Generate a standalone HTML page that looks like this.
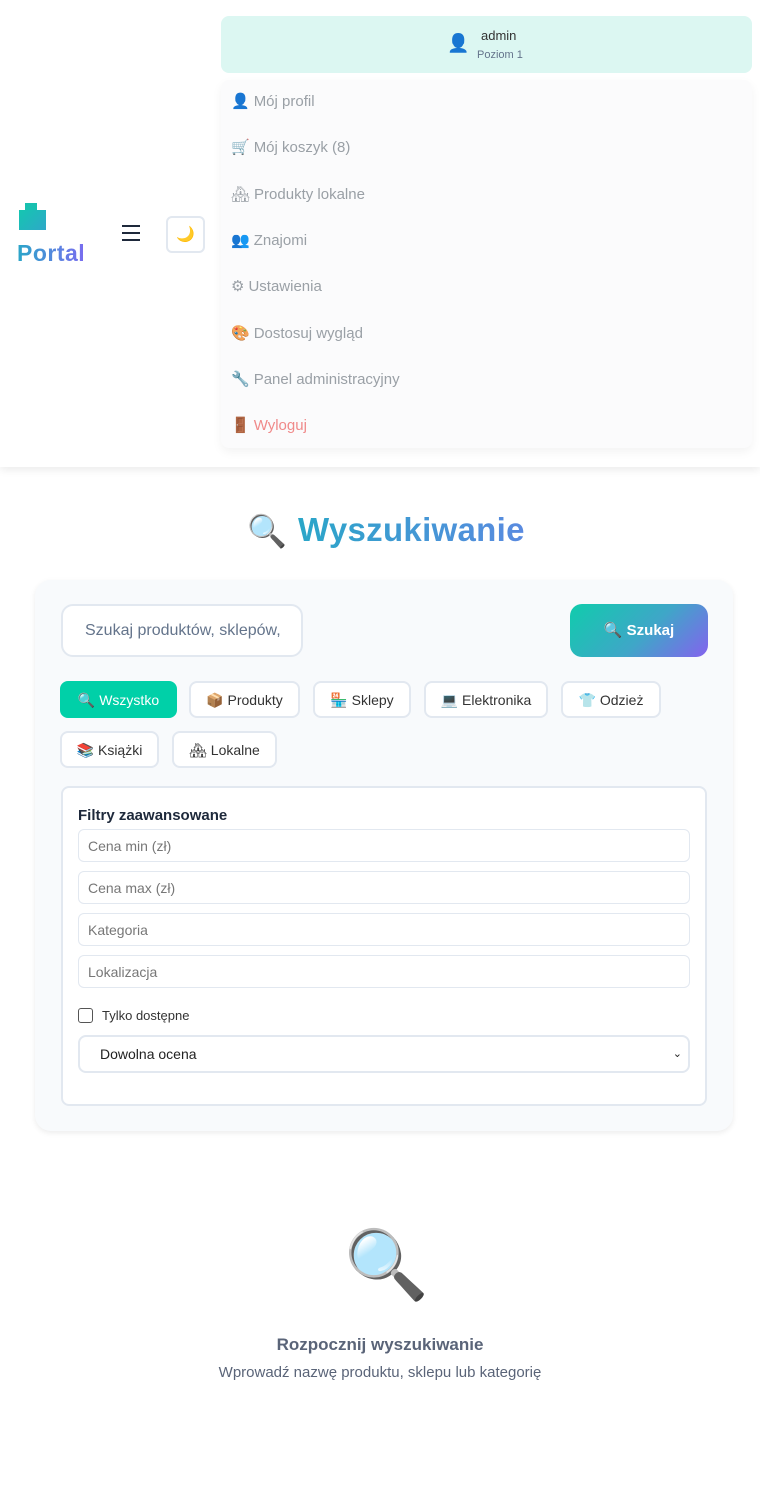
<!DOCTYPE html>
<html><head><meta charset="utf-8"><style>
*{box-sizing:border-box;margin:0;padding:0}
body{width:760px;height:1498px;background:#fff;font-family:"Liberation Sans","Noto Sans CJK SC",sans-serif;position:relative;overflow:hidden}
.a{position:absolute}
.hdr{left:0;top:0;width:760px;height:467px;background:#fff;box-shadow:0 3px 8px rgba(0,0,0,.08)}
.top{left:221px;top:16px;width:531px;height:57px;background:#dcf7f2;border-radius:8px;text-align:center}
.menu{left:221px;top:80px;width:531px;height:368px;background:#fbfbfc;border-radius:8px;box-shadow:0 4px 10px rgba(0,0,0,.05)}
.mi{left:231px;font-size:15px;color:#9aa0a6;white-space:nowrap}
.mi span{font-size:15px;margin-right:4px}
.card{left:35px;top:580px;width:698px;height:551px;background:#f8fafc;border-radius:16px;box-shadow:0 2px 6px rgba(0,0,0,.08)}
.chip{height:37px;border:2px solid #e2e8f0;border-radius:8px;background:#fff;font-size:14px;color:#333;display:flex;align-items:center;justify-content:center;gap:4px;padding-top:2px}
.inp{left:78px;width:612px;height:33px;border:1px solid #e2e8f0;border-radius:6px;background:#fff;font-size:14px;color:#777;padding-left:9px;line-height:33px}
</style></head><body>
<div class="a hdr"></div>
<div class="a" style="left:25px;top:203px;width:12px;height:8px;background:#18c0b0"></div>
<div class="a" style="left:19px;top:210px;width:27px;height:20px;background:linear-gradient(135deg,#14c6b0,#2ea8c8)"></div>
<div class="a" style="left:17px;top:240px;font-size:23px;font-weight:bold;letter-spacing:0.5px;background:linear-gradient(90deg,#2aa6c8,#7a6cf0);-webkit-background-clip:text;color:transparent">Portal</div>
<div class="a" style="left:122px;top:225px;width:18px;height:2px;background:#1e293b;box-shadow:0 7px 0 #1e293b,0 14px 0 #1e293b"></div>
<div class="a" style="left:166px;top:216px;width:39px;height:37px;border:2px solid #e2e8f0;border-radius:6px;text-align:center;line-height:33px;font-size:15px">🌙</div>
<div class="a top"><div style="position:absolute;left:226px;top:17px;font-size:18px">👤</div><div style="position:absolute;left:260px;top:12px;font-size:13px;color:#333">admin</div><div style="position:absolute;left:256px;top:33px;font-size:11px;color:#64748b">Poziom 1</div></div>
<div class="a menu"></div>
<div class="a mi" style="top:92px"><span>👤</span>Mój profil</div>
<div class="a mi" style="top:138px"><span>🛒</span>Mój koszyk (8)</div>
<div class="a mi" style="top:185px"><span>🏘</span>Produkty lokalne</div>
<div class="a mi" style="top:231px"><span>👥</span>Znajomi</div>
<div class="a mi" style="top:277px"><span>⚙</span>Ustawienia</div>
<div class="a mi" style="top:324px"><span>🎨</span>Dostosuj wygląd</div>
<div class="a mi" style="top:370px"><span>🔧</span>Panel administracyjny</div>
<div class="a mi" style="top:416px;color:#f08a8a"><span>🚪</span>Wyloguj</div>

<div class="a" style="left:247px;top:512px;font-size:32px;color:#2eaac4">🔍</div>
<div class="a" style="left:298px;top:511px;font-size:33px;font-weight:bold;letter-spacing:0.3px;background:linear-gradient(90deg,#2aa6c8,#5a8ae0);-webkit-background-clip:text;color:transparent">Wyszukiwanie</div>

<div class="a card"></div>
<div class="a" style="left:61px;top:604px;width:242px;height:53px;border:2px solid #e2e8f0;border-radius:12px;background:#fff;font-size:16px;color:#64748b;padding-left:22px;line-height:49px;white-space:nowrap;overflow:hidden">Szukaj produktów, sklepów,</div>
<div class="a" style="left:570px;top:604px;width:138px;height:53px;border-radius:12px;background:linear-gradient(135deg,#10ccac,#3fa6c8 55%,#8462ee);color:#fff;font-weight:bold;font-size:15px;text-align:center;line-height:53px">🔍 Szukaj</div>

<div class="a chip" style="left:60px;top:681px;width:117px;background:#00d0a8;border-color:#00d0a8;color:#fff">🔍 Wszystko</div>
<div class="a chip" style="left:189px;top:681px;width:111px">📦 Produkty</div>
<div class="a chip" style="left:313px;top:681px;width:98px">🏪 Sklepy</div>
<div class="a chip" style="left:424px;top:681px;width:124px">💻 Elektronika</div>
<div class="a chip" style="left:561px;top:681px;width:100px">👕 Odzież</div>
<div class="a chip" style="left:60px;top:731px;width:99px">📚 Książki</div>
<div class="a chip" style="left:172px;top:731px;width:105px">🏘 Lokalne</div>

<div class="a" style="left:61px;top:786px;width:646px;height:320px;border:2px solid #e2e8f0;border-radius:8px;background:#fff"></div>
<div class="a" style="left:78px;top:807px;font-size:15px;font-weight:bold;color:#1e293b">Filtry zaawansowane</div>
<div class="a inp" style="top:829px">Cena min (zł)</div>
<div class="a inp" style="top:871px">Cena max (zł)</div>
<div class="a inp" style="top:913px">Kategoria</div>
<div class="a inp" style="top:955px">Lokalizacja</div>
<div class="a" style="left:78px;top:1008px;width:15px;height:15px;border:1px solid #555;border-radius:3px;background:#fff"></div>
<div class="a" style="left:102px;top:1008px;font-size:13px;color:#333">Tylko dostępne</div>
<div class="a" style="left:78px;top:1035px;width:612px;height:38px;border:2px solid #e2e8f0;border-radius:8px;background:#fff;font-size:14px;color:#222;padding-left:20px;line-height:34px">Dowolna ocena<span style="position:absolute;right:6px;top:0;font-size:11px">⌄</span></div>

<div class="a" style="left:344px;top:1225px;font-size:68px;line-height:80px">🔍</div>
<div class="a" style="left:0;top:1335px;width:760px;text-align:center;font-size:17px;font-weight:bold;color:#5a6478">Rozpocznij wyszukiwanie</div>
<div class="a" style="left:0;top:1364px;width:760px;text-align:center;font-size:15px;color:#5a6478">Wprowadź nazwę produktu, sklepu lub kategorię</div>
</body></html>
